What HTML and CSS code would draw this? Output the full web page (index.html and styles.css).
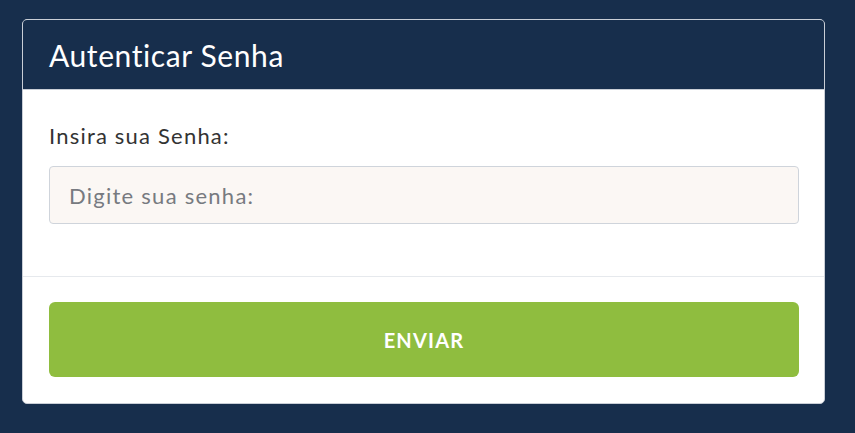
FILE: index.html
```html
<!DOCTYPE html>
<html>
<head>
<meta charset="utf-8">
<title>Autenticar Senha</title>
<meta name="viewport" content="width=device-width, initial-scale=1">
<link rel="stylesheet" href="styles.css">
</head>
<body>
<div class="panel">
  <div class="panel-heading">
    <h1>Autenticar Senha</h1>
  </div>
  <div class="panel-body">
    <label for="senha">Insira sua Senha:</label>
    <input type="password" id="senha" class="field" placeholder="Digite sua senha:">
  </div>
  <div class="panel-footer">
    <button class="button">ENVIAR</button>
  </div>
</div>
</body>
</html>
```

FILE: styles.css
```css
body {
  margin: 0;
  background: #172e4c;
  font-family: Lato, "Open Sans", sans-serif;
  padding: 19px 30px 30px 22px;
}
.panel {
  width: 801px;
  background: #ffffff;
  border: 1px solid #c9ced6;
  border-radius: 5px;
  overflow: hidden;
}
.panel-heading {
  background: #172e4c;
  border-bottom: 1px solid #c9ced6;
  padding: 0 26px;
  height: 69px;
  display: flex;
  align-items: center;
}
.panel-heading h1 {
  margin: 0;
  color: #ffffff;
  font-size: 30px;
  font-weight: normal;
  letter-spacing: 0.6px;
}
.panel-body {
  padding: 32px 26px 52px;
  border-bottom: 1px solid #e6e9ed;
}
.panel-body label {
  display: block;
  color: #333333;
  font-size: 22px;
  letter-spacing: 1.2px;
  margin-bottom: 17px;
}
.field {
  display: block;
  box-sizing: border-box;
  width: 750px;
  height: 58px;
  padding: 0 19px;
  background: #fbf7f4;
  border: 1px solid #cfd4db;
  border-radius: 4px;
  font-family: Lato, sans-serif;
  font-size: 22px;
  letter-spacing: 1.25px;
  color: #333;
}
.field::placeholder {
  color: #777a80;
}
.panel-footer {
  padding: 25px 26px 26px;
}
.button {
  display: block;
  width: 750px;
  height: 75px;
  border: none;
  border-radius: 6px;
  background: #8fbd3f;
  color: #ffffff;
  font-family: Lato, sans-serif;
  font-size: 20px;
  font-weight: bold;
  letter-spacing: 1.2px;
}
```
